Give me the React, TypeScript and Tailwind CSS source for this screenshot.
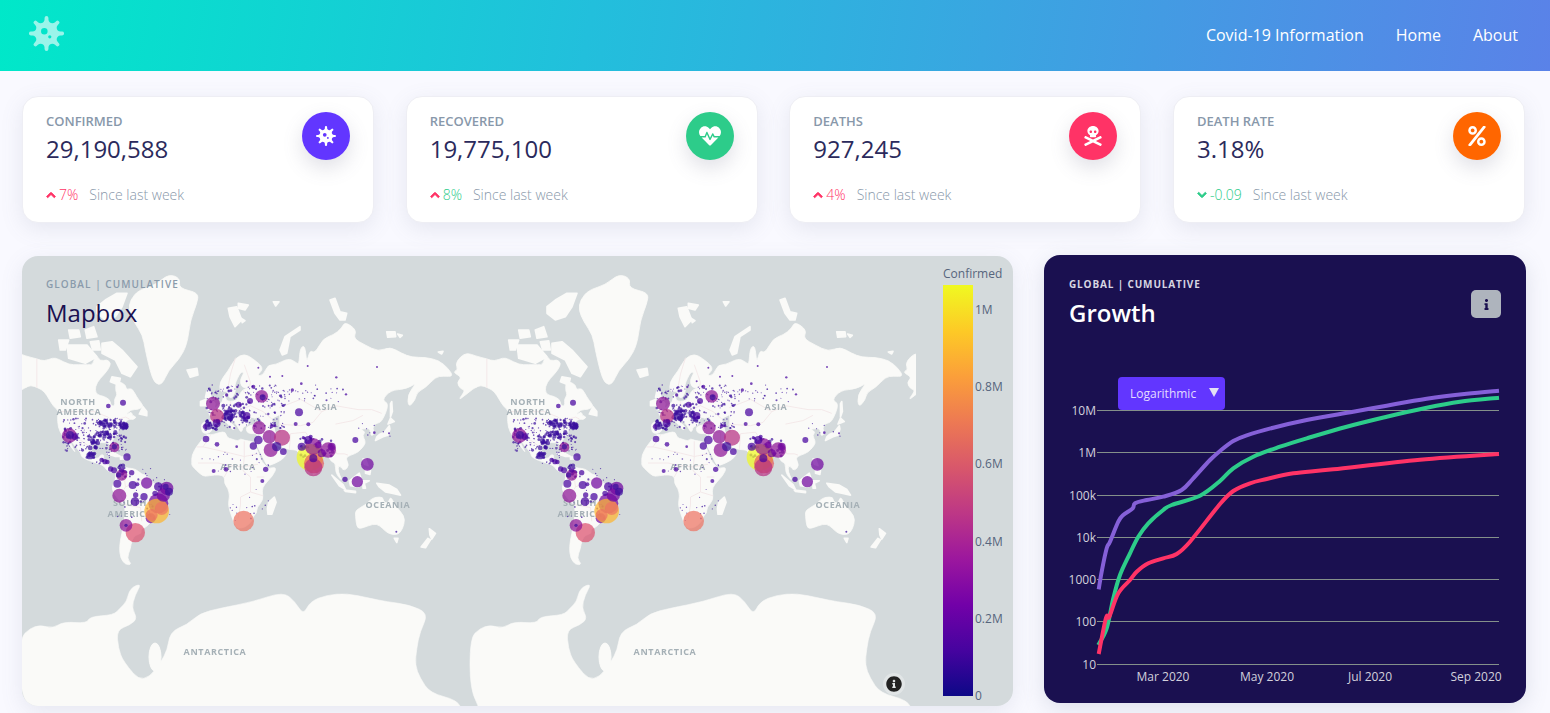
import React from "react";
import { FaVirus, FaHeartbeat, FaSkullCrossbones, FaPercent, FaChevronUp, FaChevronDown, FaInfo, FaInfoCircle } from "react-icons/fa";

type P = [number, number];
const px = (lon: number) => -12 + (lon + 180) * 1.25;
const py = (lat: number) => 482 - 71.6 * Math.log(Math.tan(Math.PI / 4 + (lat * Math.PI) / 360));
const inv = (x: number, y: number): P => [(x + 12) / 1.25 - 180, (2 * (Math.atan(Math.exp((482 - y) / 71.6)) - Math.PI / 4) * 180) / Math.PI];
const z1 = (a: number[][]): P[] => a.map(([x, y]) => inv(22 + x / 3, 270 + y / 3));
const z2 = (a: number[][]): P[] => a.map(([x, y]) => inv(205 + x / 3, 270 + y / 3));
const geo = (pts: P[]) => pts.map(([a, b]) => `${px(a).toFixed(1)},${py(b).toFixed(1)}`).join(" ");
const blobXY = (q: number[][]) => {
  const mid = (i: number) => {
    const s = q[i % q.length], e = q[(i + 1) % q.length];
    return `${((s[0] + e[0]) / 2).toFixed(1)} ${((s[1] + e[1]) / 2).toFixed(1)}`;
  };
  let d = `M${mid(0)}`;
  for (let i = 1; i <= q.length; i++) {
    const c = q[i % q.length];
    d += ` Q${c[0].toFixed(1)} ${c[1].toFixed(1)} ${mid(i)}`;
  }
  return d + "Z";
};
const blob = (pts: P[]) => blobXY(pts.map(([a, b]) => [px(a), py(b)]));

const land: P[][] = [
  [[-168,65.6],[-164,66.5],[-166,68.3],[-162,70.3],[-156.5,71.3],[-150,70.5],[-141,69.7],[-135,69],[-128,70],[-124,69.7],[-115,68],[-108,68],[-100,68],[-96,68],[-94,71],[-90,69],[-85,69.5],[-81.5,68.5],[-84,66.5],[-87,65],[-93,62],[-94.5,59],[-92.5,57],[-88,56.5],[-82.5,55],[-82,52.5],[-79.5,51.5],[-78.5,53],[-79,55],[-76.5,57],[-78,59],[-77.5,62.3],[-73,62],[-70,61],[-69,59],[-65,60],[-61,56],[-57,53],[-56,51.5],[-60,50],[-66,50],[-70,47],[-65,49],[-65,47],[-61,46],[-64,44.5],[-67,45],[-70,43.5],[-70,41.7],[-74,40.5],[-76,38],[-76,35],[-81,32],[-80,27],[-80.5,25.2],[-82,27],[-83,29.5],[-85,29.7],[-89,30.2],[-94,29.5],[-97,28],[-97.7,22],[-95,18.5],[-91,18.7],[-90.5,21],[-87,21.5],[-88,16],[-84,15.8],[-83.5,11],[-81,9],[-79,9.5],[-77,8.5],[-78.5,7.5],[-80.5,7.5],[-83,8.3],[-85.5,10],[-87.5,13],[-92,14.5],[-96,16],[-101,17.5],[-105.5,20],[-105.5,22.5],[-110,27],[-113,31],[-114.8,31.5],[-112,26],[-110,23],[-112,25],[-115,29],[-117,32.5],[-120.5,34.5],[-124,40],[-124.5,47],[-123,49],[-128,52],[-131,55],[-135,58.5],[-140,60],[-146,61],[-150,60],[-152,59.5],[-158,57],[-164,54.5],[-158,59],[-162,59.5],[-165,62],[-161,64]],
  z1([[440,12],[475,25],[470,55],[530,68],[525,100],[505,150],[495,225],[470,270],[440,300],[420,345],[398,340],[385,305],[370,240],[362,195],[335,155],[320,120],[325,90],[350,60],[400,45]]),
  z1([[315,70],[300,110],[280,140],[250,150],[225,130],[225,110],[250,90],[285,70]]),
  z1([[240,220],[270,215],[300,240],[345,290],[325,320],[300,310],[280,270],[240,250]]),
  z1([[135,225],[195,225],[225,260],[190,280],[140,265]]),
  z1([[110,210],[140,210],[130,240],[115,240]]),
  z1([[140,180],[170,180],[175,200],[145,205]]),
  z1([[190,180],[215,170],[225,200],[195,205]]),
  z1([[205,215],[230,212],[235,240],[212,240]]),
  z1([[270,320],[295,325],[290,345],[265,335]]),
  [[-59,47.7],[-53,46.7],[-53,49],[-56,51.5]],
  z1([[495,300],[525,295],[528,315],[505,322]]),
  [[-77,8.5],[-72,12],[-68,11],[-62,10.5],[-57,6],[-52,5],[-50,0],[-44,-2.5],[-37,-5],[-35,-7.5],[-39,-15],[-40,-22],[-48,-26],[-49,-29],[-53,-34],[-58,-35],[-57,-38],[-62,-39],[-65,-42],[-66,-47],[-69,-52],[-65,-55],[-70,-55],[-74,-52],[-75,-46],[-73,-38],[-71,-30],[-70,-18],[-76,-14],[-81,-6],[-80,-2],[-78,2],[-77.5,8]],
  [[-85,22],[-80,23],[-74,20],[-78,20]],
  [[-74,19.5],[-69,19.5],[-69,18.3],[-74,18]],
  [[-17,15],[-17,21],[-13,27.5],[-9.5,31],[-6,35.8],[-2,35],[5,36.8],[10,37.3],[11,33.5],[15,32.5],[20,31],[22,32.8],[25,31.5],[32,31],[34,28],[37,21],[39,16],[43,12],[44,10.5],[51,12],[48,5],[41,-2],[39,-7],[40.5,-14],[35,-20],[35,-24],[32.5,-26],[31,-30],[26,-34],[20,-34.8],[18,-33],[15,-27],[12,-18],[13.5,-11],[12,-5],[9,-1],[9.5,4],[5,6],[-3,5],[-8,4.5],[-13,9],[-17,13]],
  [[49,-12],[50.5,-16],[47,-25],[44,-25],[43.5,-21],[44.5,-16]],
  [[-9,37],[-9.5,43],[-2,43.5],[-1,46],[-4.5,48.5],[2,51],[4,52],[8,54],[8,57],[10.5,57.5],[10,54.5],[14,54],[19,54.5],[21,57],[24,59.3],[29,60],[23,60],[21.5,63],[25,65.5],[22,65.8],[17,61],[18.5,59.5],[16,56],[13,55.5],[11,59],[6,58],[5,62],[12,66],[18,70],[25,71],[31,70],[41,67],[35,64.5],[40,64.5],[44,68],
    ...z2([[210,285],[250,265],[270,275],[282,285],[285,235],[300,225],[305,280],[315,240],[330,250],[355,205],[385,195],[410,175],[420,155],[455,180],[445,205],[480,225],[520,245],[555,230],[590,250],[620,262],[660,262],[700,270],[730,295],[745,320],[715,318]]),
    [178,64],[170,60],[163,58],[162,55],[156.5,51],[155.5,57],[163,62],[155,59.5],[142,59],[135,54.5],[141,53],[135,43],[130,42.5],[127.5,39.5],[129.5,36],[126.5,34.5],[126,37],[125,39.5],[121,39],[118,39],[122,37],[119.5,35],[122,31],[121,28],[116,23],[110,21],[106,19],[109,13],[105,9],[103,11],[100.5,13.5],[100,8],[103.5,1.5],[101,3],[98,8],[98,15],[94.5,16],[92,21],[89,22],[86,20],[80,15],[80,11],[77.5,8],[73,18],[72,21],[69,22],[67,25],[61,25],[57,26.5],[52,27.5],[49,30],[48,29],[51,25],[56,25],[56.5,24.5],[59.5,22.5],[55,17],[45,13],[43,13],[39,21],[35,28],[34.5,31.5],[36,36],[30,36],[27,37],[26.5,40],[29,41],[35,42],[41,41],[38,44],[37,46.5],[33,45],[31,46.5],[28,43],[28,41],[24,40.5],[23.5,38],[22,37],[19.5,41],[14,45.5],[12.5,44],[18.5,40],[16,38],[12,42],[9,44.3],[3,43],[0,39.5],[-2,36.8],[-6,36]],
  [[-5,50],[1,51],[1.5,53],[-2,56],[-2,58],[-5,58.5],[-6,56],[-3,54],[-5,52]],
  [[-10,52],[-6,52],[-6,55],[-10,54]],
  [[130,31.5],[136,34],[140,35],[141.5,39],[141,41],[140,40],[137,37],[133,35.5],[131,34]],
  [[140,42],[145,43.5],[142,45.5]],
  [[142,46],[143.5,49],[143,54],[142,53]],
  [[120,18],[122,18],[124,13],[121,14]],
  [[122,10],[126,9],[125.5,6],[122,7]],
  [[109,1],[117,7],[119,1],[116,-4],[110,-3]],
  [[95,5.5],[104,-2],[106,-6],[101,-3]],
  [[105,-6.5],[114,-7.5],[114,-8.5],[106,-7.5]],
  [[120,1],[125,1],[121,-1],[122,-5],[120,-5]],
  [[131,-1],[141,-2.5],[147,-6],[150,-10.5],[143,-9],[138,-8],[133,-4]],
  [[114,-22],[122,-18],[126,-14],[130,-12],[136,-12],[136,-15],[140,-17.5],[142,-11],[146,-19],[153,-26],[153,-32],[150,-37.5],[146,-39],[140,-38],[136,-35],[131,-31.5],[124,-33],[118,-35],[115,-34],[114,-26]],
  [[145,-41],[148,-41],[147,-43.5]],
  [[173,-35],[178,-38],[175,-41.5],[173.5,-39]],
  [[172,-41],[174,-42],[170,-46.5],[166.5,-46]],
  [[80,9.5],[82,7],[80.5,6]],
  z2([[225,240],[240,200],[285,170],[285,180],[255,200],[245,250],[232,255]]),
  z2([[70,115],[95,110],[110,150],[90,170],[75,140]]),
  z2([[100,100],[130,105],[120,120],[100,115]]),
  z2([[108,145],[120,152],[112,158]]),
  z2([[205,95],[222,95],[212,108]]),
  z2([[375,90],[390,85],[405,125],[425,130],[420,150],[405,150],[390,130]]),
  z2([[545,185],[570,185],[572,200],[548,202]]),
  z2([[578,192],[592,196],[585,202]]),
  z2([[700,246],[714,244],[710,252]]),
];
const caspian: P[] = [[47,45],[53,47],[53,41],[54,37],[50,37],[49,41]];
const z3 = (a: number[][]) => a.map(([x, y]) => [20 + x / 3, 255 + y / 3]);
const antarctica: number[][] = [
  [20,690],[20,638],
  ...z3([[30,1120],[60,1110],[100,1120],[130,1100],[200,1105],[210,1085],[280,1080],[300,1060],[320,1040],[330,1000],[365,985],[345,1020],[335,1060],[352,1090],[330,1110],[290,1125],[295,1180],[310,1220],[370,1290],[440,1200],[450,1130],[500,1110],[540,1075],[600,1060],[700,1040],[790,1010],[825,1040],[850,1080],[870,1040],[920,1020],[980,1015],[1050,1030],[1100,1040],[1170,1050],[1225,1075],[1200,1130],[1190,1180]]),
  [415,665],[420,678],[430,693],[457,700],[463,712],[463,770],[32,770],[32,712],
];
const borders: P[][] = [
  [[-123,49],[-95,49],[-84,46],[-79,43],[-75,45],[-70,46],[-67,45]],
  [[-141,69.7],[-141,60]],
  [[-117,32.5],[-106,31.7],[-97,26]],
  [[-70,-18],[-58,-20],[-57,-30]],[[-70,-4],[-60,1],[-52,3]],[[-72,12],[-70,-4],[-74,-10],[-70,-18]],
  [[-8,27],[12,23],[25,20],[36,22]],[[-2,35],[-8,27],[-13,27]],[[25,31],[25,20],[24,9],[30,4],[30,-8],[22,-12],[22,-18],[20,-28]],
  [[-12,15],[4,15],[14,13],[24,12],[36,14]],[[14,13],[9,4]],[[30,-8],[40,-11]],[[35,4],[41,4]],
  [[30,52],[40,49],[47,45]],[[52,42],[70,41],[80,43],[87,49],[98,52],[116,50],[127,50],[135,48]],[[53,51],[70,55],[87,49]],[[98,42],[112,44],[120,47]],[[74,37],[80,30],[88,27],[97,28],[99,22],[105,22],[108,21]],[[61,25],[62,36],[74,37]],[[67,25],[71,28],[74,33]],[[46,37],[46,30]],[[36,36],[42,37],[46,37]],
  [[8,48],[2,51]],[[14,54],[15,49],[23,50],[30,52]],[[24,59],[28,56],[30,52]],[[12,47],[20,46],[28,45]],[[-2,43.5],[3,43]],
  [[18,70],[14,65],[12,60]],[[25,68],[30,62],[29,60]],
];

const C = { d: "#46039f", k: "#3a109c", m: "#7006a0", g: "#8c1496", p: "#b52f82", s: "#e45c60", a: "#ed7363", o: "#fdb42f", y: "#f0f921" };
const big: [number, number, number, string][] = [
  [870,607,40,C.y],[882,625,30,C.s],[880,637,27,C.p],[880,575,25,C.g],[925,585,23,C.g],[935,575,12,C.m],[845,575,12,C.d],[865,555,12,C.d],[905,595,12,C.m],[880,610,12,C.d],[895,570,10,C.m],[850,548,5,C.d],[872,545,6,C.d],
  [415,745,30,C.m],[392,790,15,C.m],[410,768,37,C.o],[395,780,18,C.a],[425,760,20,C.a],[346,833,29,"#dc506f"],[318,811,19,C.g],[318,811,5,C.k],[671,798,31,C.a],
  [298,722,21,C.g],[380,684,17,C.m],[338,690,12,C.d],[352,688,6,C.d],[347,720,8,C.d],[372,725,11,C.d],[345,740,13,C.d],[292,686,12,C.d],[305,660,17,C.g],[305,645,8,C.d],[296,660,8,C.k],[440,700,20,C.m],[415,695,13,C.d],[430,720,20,C.m],[447,710,12,C.k],[437,695,9,C.k],[321,606,11,C.d],[283,577,15,C.g],[283,575,8,C.k],[335,653,8,C.d],[272,642,8,C.d],[282,646,9,C.d],[255,620,8,C.d],[245,615,7,C.d],[262,621,7,C.d],[210,602,11,C.k],[148,542,22,C.g],[150,540,12,C.k],[165,545,10,C.d],[254,505,11,C.k],[270,510,8,C.k],[309,443,9,C.d],[265,453,7,C.d],[405,715,8,C.d],
  [579,446,21,C.g],[591,483,21,C.p],[725,424,19,C.g],[728,427,9,C.k],[837,472,12,C.d],[690,438,9,C.d],[656,449,9,C.d],[717,518,20,C.g],[748,545,20,C.g],[786,548,24,C.p],[752,585,21,C.g],[715,555,13,C.d],[700,573,11,C.d],[770,575,14,C.k],[790,590,10,C.d],[558,552,10,C.d],[591,568,7,C.d],[650,575,4,C.d],[737,643,8,C.d],[727,678,6,C.d],[618,643,7,C.d],[581,648,6,C.d],[565,512,12,C.k],[590,505,12,C.d],[625,480,14,C.k],[680,482,11,C.d],[555,515,7,C.d],[610,452,6,C.k],[700,395,6,C.d],
  [1006,555,9,C.d],[1042,628,19,C.m],[1012,680,17,C.m],[975,673,8,C.d],[865,508,6,C.d],[827,507,6,C.d],[1107,535,3,C.d],[1063,533,4,C.d],[1129,830,3,C.k],[755,513,6,C.d],[765,513,4,C.d],[630,465,8,C.k],
  [715,338,3,C.d],[680,379,3,C.d],[750,365,3,C.d],[787,363,3,C.d],[949,367,3.5,C.d],[1071,336,3,C.d],[863,333,3,C.d],[844,386,4,C.d],[817,405,5,C.d],[978,418,3.5,C.d],[652,396,3.5,C.d],[620,420,5,C.d],[633,407,4,C.d],
];
const clusters: [number, number, number, number, number, number, number][] = [
  [130,490,190,100,190,1.5,5],[230,495,60,25,24,3,8],[225,530,65,20,32,3,8],[210,545,25,35,18,3,8],[125,520,45,30,14,2,6],[200,592,25,18,10,3,8],[290,630,30,40,14,2,7],[298,503,24,18,22,4,8],
  [560,390,240,130,190,1.5,5],[610,465,40,30,26,3,9],[660,470,30,30,16,3,8],[555,495,40,30,18,3,8],[740,390,230,50,40,1.5,3.5],[530,590,240,60,22,1.5,3.5],[625,650,120,150,18,1.5,3.5],[210,575,70,60,22,1.5,4],[290,640,160,160,32,1.5,4],[840,550,100,60,32,3,9],[1010,500,100,50,8,1.5,3],[750,495,40,25,12,2,4],
];
const dots = (() => {
  let s = 12345;
  const rnd = () => { s = (s * 16807) % 2147483647; return s / 2147483647; };
  const out: [number, number, number][] = [];
  clusters.forEach(([x, y, w, h, n, a, b]) => {
    for (let i = 0; i < n; i++) out.push([x + rnd() * w, y + rnd() * h, a + rnd() * rnd() * (b - a)]);
  });
  return out;
})();

const labels: [string, number, number][] = [["NORTH", 78, 405], ["AMERICA", 79, 415], ["SOUTH", 130, 506], ["AMERICA", 130, 517], ["ASIA", 326, 410], ["AFRICA", 238, 470], ["OCEANIA", 388, 508], ["ANTARCTICA", 215, 655]];

function MapArt() {
  return (
    <svg viewBox="22 256 991 450" className="absolute inset-0 w-full h-full">
      <defs>
        <clipPath id="mapclip"><rect x="22" y="256" width="894" height="452" /></clipPath>
        <filter id="soft" x="0" y="0" width="100%" height="100%"><feGaussianBlur stdDeviation="0.4" /></filter>
        <g id="world">
          <g fill="#fafaf8" stroke="#fafaf8" strokeLinejoin="round">
            {land.map((l, i) =>
              l.length <= 9 ? <polygon key={i} points={geo(l)} strokeWidth="1.6" /> : <path key={i} d={blob(l)} strokeWidth="0.8" />
            )}
            <path d={blobXY(antarctica)} strokeWidth="0.6" />
            <ellipse cx="155" cy="657" rx="6" ry="14" />
          </g>
          <polygon points={geo(caspian)} fill="#d4dadc" />
          {borders.map((b, i) => <polyline key={i} points={geo(b)} fill="none" stroke="#f3e4e6" strokeWidth="0.8" />)}
          {labels.map(([t, x, y], i) => (
            <text key={i} x={x} y={y} textAnchor="middle" fontSize="9" fontWeight="700" letterSpacing="0.6" fill="#a5b0b6" fontFamily="'Open Sans',sans-serif">{t}</text>
          ))}
        </g>
        <g id="pts">
          {dots.map(([x, y, r], i) => <circle key={i} cx={20 + x / 3} cy={255 + y / 3} r={r / 3} fill={C.k} opacity="0.7" />)}
          {big.map(([x, y, r, c], i) => <circle key={i} cx={20 + x / 3} cy={255 + y / 3} r={r / 3} fill={c} opacity="0.72" />)}
        </g>
      </defs>
      <rect x="22" y="256" width="991" height="450" fill="#d4dadc" />
      <g clipPath="url(#mapclip)">
        <g filter="url(#soft)">
          <use href="#world" />
          <use href="#world" x="450" />
          <use href="#world" x="900" />
        </g>
      </g>
      <use href="#pts" />
      <use href="#pts" x="450" />
    </svg>
  );
}

const smooth = (p: P[]) => {
  let d = `M${p[0][0]} ${p[0][1]}`;
  for (let i = 0; i < p.length - 1; i++) {
    const a = p[Math.max(0, i - 1)], b = p[i], c = p[i + 1], e = p[Math.min(p.length - 1, i + 2)];
    d += ` C${(b[0] + (c[0] - a[0]) / 6).toFixed(1)} ${(b[1] + (c[1] - a[1]) / 6).toFixed(1)} ${(c[0] - (e[0] - b[0]) / 6).toFixed(1)} ${(c[1] - (e[1] - b[1]) / 6).toFixed(1)} ${c[0]} ${c[1]}`;
  }
  return d;
};
const purple: P[] = [[1098.7,589.3],[1101.7,571.7],[1106.7,548.3],[1110,541.7],[1118.3,521.7],[1123.3,515],[1132.7,508.3],[1135,503.3],[1146.7,500],[1163.3,496.7],[1181.7,490],[1193.3,478.3],[1210,460],[1220,451],[1233.3,441],[1246.7,435.3],[1273.3,427.7],[1306.7,420],[1353.3,411.7],[1386.7,405.7],[1426.7,398.7],[1466.7,393.7],[1499,390.7]];
const green: P[] = [[1098.3,645],[1106.7,628.3],[1113.3,598.3],[1120,575],[1130,553.3],[1138.3,536.7],[1148.3,523.3],[1163.3,510],[1171.7,505],[1200,495.7],[1220,481],[1233.3,468.3],[1253.3,456.7],[1280,446.7],[1306.7,438.3],[1346.7,426.7],[1386.7,416.7],[1426.7,407.7],[1460,401.7],[1499,397.7]];
const red: P[] = [[1098.7,654],[1106,617.7],[1109.3,616.7],[1118.3,593.3],[1130,580],[1136.7,571.7],[1148.3,563.3],[1163.3,558.3],[1176.7,554],[1190,541.7],[1220,504],[1233.3,491],[1250,483.3],[1266.7,479],[1293.3,473.3],[1333.3,469.3],[1420,459.7],[1499,454]];
const yTicks: [string, number][] = [["10M", 410], ["1M", 452], ["100k", 495], ["10k", 537], ["1000", 579], ["100", 621], ["10", 664]];
const xTicks: [string, number][] = [["Mar 2020", 1163], ["May 2020", 1267], ["Jul 2020", 1370], ["Sep 2020", 1476]];

function Chart() {
  return (
    <svg viewBox="1044 355 482 348" className="block w-[482px] h-[348px]">
      {yTicks.map(([t, y]) => (
        <g key={t}>
          <line x1="1097" x2="1499" y1={y + 0.5} y2={y + 0.5} stroke="#84908a" strokeWidth="1" />
          <text x="1096" y={y + 4.5} textAnchor="end" fontSize="12" fill="#d2d1dc" fontFamily="'Open Sans',sans-serif">{t}</text>
        </g>
      ))}
      {xTicks.map(([t, x]) => (
        <text key={t} x={x} y="681" textAnchor="middle" fontSize="12" fill="#d2d1dc" fontFamily="'Open Sans',sans-serif">{t}</text>
      ))}
      <path d={smooth(purple)} fill="none" stroke="#8560d8" strokeWidth="4" />
      <path d={smooth(green)} fill="none" stroke="#2dcc8a" strokeWidth="4" />
      <path d={smooth(red)} fill="none" stroke="#ff3366" strokeWidth="4" />
    </svg>
  );
}

const cards = [
  { t: "Confirmed", v: "29,190,588", c: "7%", up: true, bad: true, bg: "bg-[#6236ff]", I: FaVirus, s: 20 },
  { t: "Recovered", v: "19,775,100", c: "8%", up: true, bad: false, bg: "bg-[#2dcc8a]", I: FaHeartbeat, s: 22 },
  { t: "Deaths", v: "927,245", c: "4%", up: true, bad: true, bg: "bg-[#ff3366]", I: FaSkullCrossbones, s: 20 },
  { t: "Death Rate", v: "3.18%", c: "-0.09", up: false, bad: false, bg: "bg-[#ff6600]", I: FaPercent, s: 20 },
];

export default function App() {
  return (
    <div className="h-[713px] overflow-hidden bg-[#f9f9ff] font-['Open_Sans',sans-serif]">
      <header className="h-[71px] flex items-center justify-between pl-[29px] pr-[32px] bg-[linear-gradient(100deg,#00e8c9_0%,#22bfdc_38%,#5a82e8_100%)]">
        <FaVirus size={35} className="text-white/60 -mt-[5px]" />
        <nav className="flex gap-8 text-base text-white -mt-[1px]">
          <span>Covid-19 Information</span>
          <span>Home</span>
          <span>About</span>
        </nav>
      </header>

      <section className="grid grid-cols-4 gap-x-[31.67px] pl-[22px] pr-[25px] pt-[25px]">
        {cards.map(({ t, v, c, up, bad, bg, I, s }) => (
          <div key={t} className="h-[127px] rounded-2xl bg-white border border-[#eeeef4] shadow-[0_6px_22px_rgba(100,110,140,0.13)] px-[23px] pt-[15px]">
            <div className="flex justify-between">
              <div>
                <div className="text-[13px] font-semibold uppercase leading-[18px] text-[#8898aa]">{t}</div>
                <div className="text-2xl font-medium leading-[38px] text-[#2b2a5c]">{v}</div>
              </div>
              <div className={`w-12 h-12 rounded-full flex items-center justify-center text-white shadow-[0_8px_20px_rgba(100,100,130,0.2)] ${bg}`}>
                <I size={s} />
              </div>
            </div>
            <div className="flex items-center mt-[16px] text-sm leading-[21px] font-light">
              {up ? <FaChevronUp size={10} stroke="currentColor" strokeWidth={50} className="text-[#ff3366] mr-[3px]" /> : <FaChevronDown size={10} stroke="currentColor" strokeWidth={50} className="text-[#2dcc8a] mr-[3px]" />}
              <span className={`mr-[11px] ${bad ? "text-[#ff3366]" : "text-[#2dcc8a]"}`}>{c}</span>
              <span className="text-[#8898aa]">Since last week</span>
            </div>
          </div>
        ))}
      </section>

      <section className="flex items-start gap-[31px] px-[22px] pt-[33px]">
        <div className="relative w-[991px] h-[450px] rounded-2xl overflow-hidden shadow-[0_6px_22px_rgba(100,110,140,0.13)]">
          <MapArt />
          <div className="relative px-6 pt-[21px]">
            <div className="text-[10px] font-semibold tracking-[1.05px] uppercase leading-[15px] text-[#8a9bab]">Global | Cumulative</div>
            <div className="text-2xl font-medium leading-[36px] mt-[3px] text-[#1a1050]">Mapbox</div>
          </div>
          <div className="absolute left-[921px] top-[10px] w-[70px] text-xs leading-[16px] text-[#56657c]">
            Confirmed
            <div className="relative mt-[3px]">
              <div className="w-[30px] h-[411px] bg-[linear-gradient(to_top,#0d0887,#46039f,#7201a8,#9c179e,#bd3786,#d8576b,#ed7953,#fb9f3a,#fdca26,#f0f921)]" />
              <span className="absolute left-[32px] top-[17px]">1M</span>
              <span className="absolute left-[32px] top-[94px]">0.8M</span>
              <span className="absolute left-[32px] top-[171px]">0.6M</span>
              <span className="absolute left-[32px] top-[249px]">0.4M</span>
              <span className="absolute left-[32px] top-[326px]">0.2M</span>
              <span className="absolute left-[32px] top-[403px]">0</span>
            </div>
          </div>
          <div className="absolute left-[861px] top-[417px] w-[22px] h-[22px] rounded-full bg-white/30 flex items-center justify-center">
            <FaInfoCircle size={16} className="text-[#222]" />
          </div>
        </div>

        <div className="relative w-[482px] h-[448px] -mt-px rounded-2xl overflow-hidden bg-[#1a1050] shadow-[0_6px_22px_rgba(100,110,140,0.18)]">
          <div className="flex justify-between h-[100px] px-[25px] pt-[22px]">
            <div>
              <div className="text-[10px] font-bold tracking-[0.85px] uppercase leading-[15px] text-[#d7d6e2]">Global | Cumulative</div>
              <div className="text-2xl font-semibold leading-[36px] mt-[3px] text-white">Growth</div>
            </div>
            <div className="w-[30px] h-[28px] mt-[13px] rounded-[5px] bg-[#aeb4bd] flex items-center justify-center text-[#1a1050]">
              <FaInfo size={11} />
            </div>
          </div>
          <Chart />
          <div className="absolute left-[74px] top-[122px] w-[107px] h-[33px] rounded-sm bg-[#6236ff] flex items-center justify-between pl-3 pr-[6px] text-xs text-[#e3dcff]">
            <span>Logarithmic</span>
            <span className="w-0 h-0 border-l-[5px] border-r-[5px] border-t-[9px] border-l-transparent border-r-transparent border-t-[#e3e0f5] -mt-[3px]" />
          </div>
        </div>
      </section>
    </div>
  );
}
